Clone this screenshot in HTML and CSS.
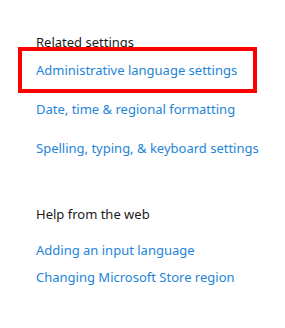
FILE: index.html
```html
<!DOCTYPE html>
<html lang="en">
<head>
    <meta charset="UTF-8">
    <meta name="viewport" content="width=device-width, initial-scale=1.0">
    <title>Language settings</title>
    <link rel="stylesheet" href="styles.css">
</head>
<body>
    <div class="panel">
        <div class="section">
            <div class="heading">Related settings</div>
            <a class="link first" href="#">Administrative language settings</a>
            <a class="link" href="#">Date, time &amp; regional formatting</a>
            <a class="link" href="#">Spelling, typing, &amp; keyboard settings</a>
        </div>

        <div class="section help">
            <div class="heading">Help from the web</div>
            <a class="link tight" href="#">Adding an input language</a>
            <a class="link close" href="#">Changing Microsoft Store region</a>
        </div>

        <div class="highlight"></div>
    </div>
</body>
</html>
```

FILE: styles.css
```css
body {
    margin: 0;
    background-color: #fff;
    font-family: "Noto Sans", "Open Sans", sans-serif;
}

.panel {
    position: relative;
    padding: 32px 0 0 36px;
    height: 296px;
}

.section {
    display: flex;
    flex-direction: column;
    align-items: flex-start;
}

.heading {
    font-size: 13px;
    line-height: 20px;
    color: #1b1b1b;
}

.link {
    font-size: 13px;
    line-height: 20px;
    color: #1e84d8;
    text-decoration: none;
    margin-top: 19px;
}

.link.first {
    margin-top: 8px;
}

.help {
    margin-top: 46px;
}

.link.tight {
    margin-top: 16px;
}

.link.close {
    margin-top: 7px;
}

/* annotation box drawn over the first link */
.highlight {
    position: absolute;
    left: 18px;
    top: 47px;
    width: 231px;
    height: 38px;
    border: 4px solid #f00;
}
```
